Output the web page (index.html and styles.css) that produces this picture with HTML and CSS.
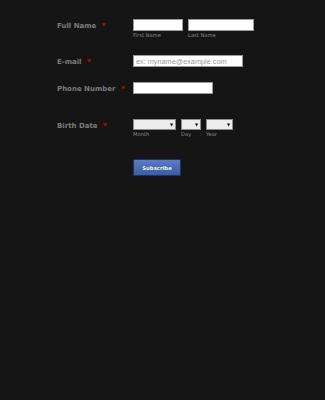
FILE: index.html
```html
<!DOCTYPE html>
<html lang="en">
<head>
    <meta charset="UTF-8">
    <title>Subscribe</title>
    <link rel="stylesheet" href="styles.css">
</head>
<body>

<form class="form">
    <div class="row row-name">
        <label class="label">Full Name <span class="req">*</span></label>
        <div class="fields">
            <div class="sub">
                <input class="input w-first" type="text">
                <span class="hint">First Name</span>
            </div>
            <div class="sub">
                <input class="input w-last" type="text">
                <span class="hint">Last Name</span>
            </div>
        </div>
    </div>

    <div class="row row-email">
        <label class="label">E-mail <span class="req">*</span></label>
        <div class="fields">
            <input class="input w-email" type="text" placeholder="ex: myname@example.com">
        </div>
    </div>

    <div class="row row-phone">
        <label class="label">Phone Number <span class="req">*</span></label>
        <div class="fields">
            <input class="input w-phone" type="text">
        </div>
    </div>

    <div class="row row-date">
        <label class="label">Birth Date <span class="req">*</span></label>
        <div class="fields">
            <div class="sub">
                <div class="select w-month"><select></select><span class="arrow">&#9660;</span></div>
                <span class="hint">Month</span>
            </div>
            <div class="sub">
                <div class="select w-day"><select></select><span class="arrow">&#9660;</span></div>
                <span class="hint">Day</span>
            </div>
            <div class="sub">
                <div class="select w-year"><select></select><span class="arrow">&#9660;</span></div>
                <span class="hint">Year</span>
            </div>
        </div>
    </div>

    <div class="row row-submit">
        <div class="label"></div>
        <button class="button" type="submit">Subscribe</button>
    </div>
</form>

</body>
</html>
```

FILE: styles.css
```css
html, body {
    margin: 0;
    background-color: #151515;
}
body {
    font-family: "DejaVu Sans", Verdana, sans-serif;
    color: #7f7f7f;
}
.form {
    padding: 19px 0 0 57px;
}
.row {
    display: flex;
    align-items: flex-start;
}
.label {
    width: 76px;
    flex: none;
    padding-top: 2px;
    font-size: 7px;
    font-weight: bold;
    line-height: 10px;
    color: #7c7c7c;
}
.req {
    color: #e00000;
    margin-left: 3px;
}
.fields {
    display: flex;
    gap: 5px;
}
.sub {
    display: flex;
    flex-direction: column;
}
.hint {
    font-size: 5.2px;
    line-height: 7px;
    margin-top: 1px;
    color: #8a8a8a;
}
.input {
    box-sizing: border-box;
    height: 12px;
    margin: 0;
    padding: 0 2px;
    border: 1px solid #9a9a9a;
    background: #fff;
    font-family: "Liberation Sans", Arial, sans-serif;
    font-size: 7.3px;
    outline: none;
}
.input::placeholder {
    color: #9c9c9c;
}
.w-first { width: 50px; }
.w-last { width: 66px; }
.w-email { width: 110px; }
.w-phone { width: 80px; }

.row-email { margin-top: 16px; }
.row-phone { margin-top: 15px; }
.row-date { margin-top: 25px; }
.row-date .label { padding-top: 3px; line-height: 9px; }
.row-submit { margin-top: 21px; }

.select {
    box-sizing: border-box;
    height: 11px;
    display: flex;
    align-items: center;
    border: 1px solid #8c8c8c;
    background: #ececec;
    background-image: radial-gradient(#c8c8c8 0.5px, transparent 0.6px);
    background-size: 2px 2px;
}
.select select {
    flex: 1;
    min-width: 0;
    height: 9px;
    border: 0;
    padding: 0;
    margin: 0;
    background: transparent;
    appearance: none;
    -webkit-appearance: none;
}
.arrow {
    font-size: 4px;
    color: #000;
    margin-right: 2px;
}
.w-month { width: 43px; }
.w-day { width: 20px; }
.w-year { width: 27px; }

.button {
    box-sizing: border-box;
    width: 48px;
    height: 17px;
    padding: 0;
    border: 1px solid #1f3363;
    border-radius: 1px;
    background: linear-gradient(#5a7cc6, #3c5ca4);
    color: #fff;
    font-family: "DejaVu Sans", Verdana, sans-serif;
    font-size: 5.3px;
    font-weight: bold;
    text-shadow: 0 0 1px #213a74;
}
```
